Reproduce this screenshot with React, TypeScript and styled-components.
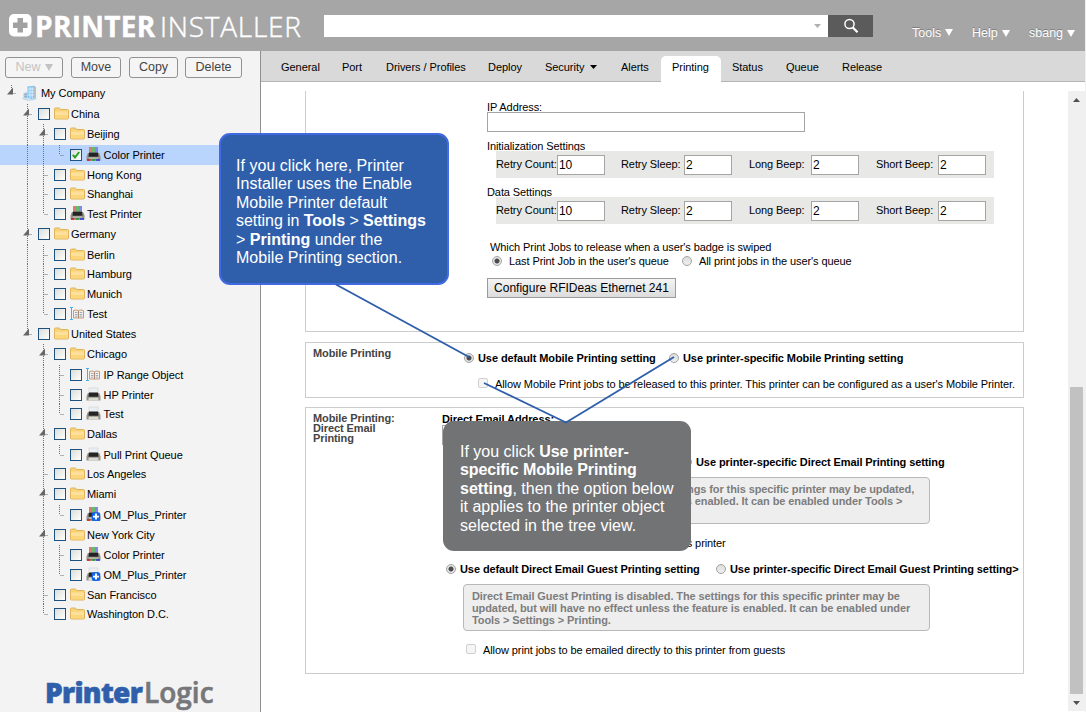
import React from "react";
import styled, { createGlobalStyle } from "styled-components";

const Global = createGlobalStyle`
  *, *::before, *::after { box-sizing: border-box; }
  html, body { margin: 0; padding: 0; overflow: hidden; background: #fff; }
  body { font-family: "Liberation Sans", Arial, sans-serif; font-size: 11px; color: #000; }
`;

const Page = styled.div`
  position: relative;
  width: 1086px;
  height: 712px;
  display: flex;
  flex-direction: column;
  background: #fff;
  border-right: 1px solid #f0f0f0;
  overflow: hidden;
`;

/* ---------- header ---------- */
const Header = styled.header`
  height: 51px;
  flex: none;
  display: flex;
  align-items: flex-start;
  background: #a6a6a6;
  color: #fff;
`;
const Brand = styled.div`
  width: 324px;
  height: 51px;
  padding: 0 0 0 9px;
  display: flex;
  align-items: center;
  font-family: "Open Sans", sans-serif;
  font-size: 28px;
  line-height: 50px;
  white-space: nowrap;
`;
const BrandMark = styled.svg`
  margin-right: 3px;
  flex: none;
`;
const BrandBold = styled.span`
  width: 125px;
  font-weight: 700;
  letter-spacing: 0.3px;
  -webkit-text-stroke: 0.4px #fff;
`;
const BrandLight = styled.span`
  font-weight: 300;
  letter-spacing: 0.75px;
  -webkit-text-stroke: 0.4px #fff;
`;
const SearchBox = styled.div`
  width: 504px;
  height: 22px;
  margin-top: 15px;
  padding-right: 7px;
  display: flex;
  align-items: center;
  justify-content: flex-end;
  background: #fff;
`;
const SearchButton = styled.div`
  width: 45px;
  height: 22px;
  margin-top: 15px;
  display: flex;
  justify-content: center;
  align-items: center;
  background: #5b5b5b;
`;
const UserMenu = styled.nav`
  display: flex;
  margin-left: 39px;
  font-size: 12.5px;
  line-height: 14px;
  text-shadow: 0 -1px 0 #7d7d7d;
`;
const UserMenuItem = styled.span<{ $w: number; $top: number }>`
  width: ${(p) => p.$w}px;
  margin-top: ${(p) => p.$top}px;
  white-space: nowrap;
  display: flex;
  align-items: center;
  gap: 4px;
`;

/* ---------- body ---------- */
const Body = styled.div`
  flex: 1;
  display: flex;
  min-height: 0;
`;
const Sidebar = styled.aside`
  width: 261px;
  flex: none;
  display: flex;
  flex-direction: column;
  background: #f3f3f3;
  border-right: 1px solid #8f8f8f;
`;
const Toolbar = styled.div`
  display: flex;
  flex: none;
  padding: 6px 0 0 5px;
  height: 32px;
`;
const ToolButton = styled.div<{ $w: number; $gap: number; $off?: boolean }>`
  width: ${(p) => p.$w}px;
  height: 21px;
  margin-right: ${(p) => p.$gap}px;
  padding-bottom: 1px;
  display: flex;
  align-items: center;
  justify-content: center;
  gap: 4px;
  border: 1px solid #929292;
  border-radius: 3px;
  background: #f5f5f5;
  color: ${(p) => (p.$off ? "#c3c3c3" : "#444")};
  font-size: 12.5px;
  line-height: 18px;
`;
const Tree = styled.div`
  flex: none;
  height: 575px;
  letter-spacing: -0.06px;
`;
const TreeRow = styled.div<{ $h: number; $on?: boolean }>`
  height: ${(p) => p.$h}px;
  display: flex;
  align-items: flex-start;
  background: ${(p) => (p.$on ? "#bad5fd" : "transparent")};
`;
const Guides = styled.svg`
  flex: none;
  overflow: visible;
`;
const TreeCheck = styled.span`
  width: 12px;
  height: 12px;
  margin: 4px 4px 0 0;
  flex: none;
  display: flex;
  border: 1px solid #1c5180;
  background: linear-gradient(135deg, #dcdcd7, #fff);
`;
const IconSlot = styled.span<{ $w: number }>`
  width: ${(p) => p.$w}px;
  height: 19px;
  flex: none;
  display: flex;
  padding-top: 2px;
`;
const TreeLabel = styled.span`
  line-height: 20px;
  white-space: nowrap;
`;
const Logo = styled.div`
  flex: 1;
  padding-left: 45px;
  font-family: "Open Sans", sans-serif;
  font-size: 28px;
  line-height: 68px;
  display: flex;
  white-space: nowrap;
`;
const LogoBlue = styled.span`
  width: 99px;
  color: #2f5fab;
  font-weight: 800;
  letter-spacing: -0.7px;
  -webkit-text-stroke: 0.6px #2f5fab;
`;
const LogoGray = styled.span`
  color: #76777a;
  font-weight: 600;
  letter-spacing: 0;
  -webkit-text-stroke: 0.6px #76777a;
`;

const Main = styled.main`
  flex: 1;
  min-width: 0;
  display: flex;
  flex-direction: column;
  letter-spacing: -0.09px;
`;
const TabBar = styled.nav`
  height: 31px;
  flex: none;
  display: flex;
  align-items: flex-end;
  padding-left: 9px;
  letter-spacing: -0.05px;
  background: linear-gradient(#d9d9d9 30px, #b4b4b4 30px);
`;
const Tab = styled.div<{ $w: number; $on?: boolean }>`
  width: ${(p) => p.$w}px;
  height: 26px;
  padding-left: 11px;
  display: flex;
  align-items: center;
  gap: 6px;
  padding-bottom: 4px;
  white-space: nowrap;
  border-radius: 5px 5px 0 0;
  background: ${(p) => (p.$on ? "#fff" : "transparent")};
`;
const Scroller = styled.div`
  flex: 1;
  min-height: 0;
  display: flex;
  margin: 9px 0 1px;
  justify-content: space-between;
`;
const Panels = styled.div`
  width: 719px;
  margin-left: 44px;
`;
const Panel = styled.section<{ $h: number; $gap: number; $cut?: boolean }>`
  height: ${(p) => p.$h}px;
  margin-bottom: ${(p) => p.$gap}px;
  display: flex;
  border: 1px solid #ccc;
  border-top-width: ${(p) => (p.$cut ? 0 : 1)}px;
`;
const PanelTitle = styled.div<{ $w: number }>`
  width: ${(p) => p.$w}px;
  flex: none;
  padding: 5px 0 0 7px;
  font-weight: 700;
  line-height: 10px;
  color: #444;
`;
const PanelBody = styled.div`
  flex: 1;
  min-width: 0;
  display: flex;
  flex-direction: column;
`;
const Line = styled.div<{ $h: number; $top?: number; $left?: number; $bold?: boolean }>`
  height: ${(p) => p.$h}px;
  margin-top: ${(p) => p.$top ?? 0}px;
  padding-left: ${(p) => p.$left ?? 0}px;
  flex: none;
  display: flex;
  align-items: center;
  line-height: ${(p) => p.$h}px;
  white-space: nowrap;
  font-weight: ${(p) => (p.$bold ? 700 : 400)};
`;
const GroupLabel = styled.div`
  height: 11px;
  margin-top: 8px;
  flex: none;
  line-height: 13px;
  white-space: nowrap;
`;
const Text = styled.span<{ $w?: number }>`
  width: ${(p) => (p.$w ? p.$w + "px" : "auto")};
  flex: none;
`;
const Field = styled.div<{ $w: number; $gap?: number }>`
  width: ${(p) => p.$w}px;
  height: 20px;
  flex: none;
  margin-right: ${(p) => p.$gap ?? 0}px;
  padding-left: 1px;
  border: 1px solid #a5a5a5;
  background: #fff;
  font-size: 12px;
  line-height: 18px;
`;
const Band = styled.div`
  width: 498px;
  height: 27px;
  margin-left: 9px;
  flex: none;
  display: flex;
  align-items: center;
  background: #e8e8e6;
  white-space: nowrap;

  ${Text} {
    padding-bottom: 2px;
  }
`;
const Radio = styled.span<{ $on?: boolean; $gap: number }>`
  width: 10px;
  height: 10px;
  margin: -1px ${(p) => p.$gap}px 0 0;
  flex: none;
  border-radius: 50%;
  border: 1px solid #a3a3a3;
  background: ${(p) =>
    p.$on ? "radial-gradient(circle, #4c4c4c 2px, #e6e6e6 3px)" : "linear-gradient(#dcdcdc, #efefef)"};
`;
const Check = styled.span<{ $gap: number }>`
  width: 10px;
  height: 10px;
  margin: -2px ${(p) => p.$gap}px 0 0;
  flex: none;
  border: 1px solid #d0d0d0;
  border-radius: 2px;
  background: #f5f5f5;
`;
const PushButton = styled.div`
  width: 189px;
  height: 20px;
  margin-top: 10px;
  border: 1px solid #9b9b9b;
  background: linear-gradient(#f4f4f4, #dcdcdc);
  font-size: 12px;
  letter-spacing: 0;
  line-height: 18px;
  text-align: center;
  white-space: nowrap;
`;
const Notice = styled.div<{ $top: number }>`
  width: 467px;
  height: 47px;
  margin: ${(p) => p.$top}px 0 0 21px;
  padding: 5px 0 0 8px;
  flex: none;
  border: 1px solid #b8b8b8;
  border-radius: 4px;
  background: #eee;
  color: #7d7d7d;
  font-weight: 700;
  letter-spacing: -0.1px;
  line-height: 12px;
  white-space: nowrap;
`;
const ScrollTrack = styled.div`
  width: 17px;
  padding: 7px 0 6px;
  display: flex;
  flex-direction: column;
  align-items: center;
  background: #f0f0f0;
`;
const ScrollThumb = styled.div`
  width: 13px;
  height: 307px;
  margin: 285px 0 auto;
  background: #c1c1c1;
`;

/* ---------- annotations over the page ---------- */
const Callout = styled.div<{ $x: number; $y: number; $w: number; $h: number; $gray?: boolean }>`
  position: absolute;
  left: ${(p) => p.$x}px;
  top: ${(p) => p.$y}px;
  width: ${(p) => p.$w}px;
  height: ${(p) => p.$h}px;
  padding: ${(p) => (p.$gray ? "22px 0 0 17px" : "22px 0 0 15px")};
  border: ${(p) => (p.$gray ? "0" : "2px solid #4169e1")};
  border-radius: 11px;
  background: ${(p) => (p.$gray ? "#727375" : "#2f5fab")};
  color: #fff;
  font-size: 16px;
  line-height: 18.4px;
  white-space: nowrap;
`;
const CalloutLine = styled.div<{ $ls?: number }>`
  letter-spacing: ${(p) => p.$ls ?? 0}px;
`;
const Leaders = styled.svg`
  position: absolute;
  left: 0;
  top: 0;
  pointer-events: none;
`;

/* ---------- icons ---------- */
const Caret = ({ w, h, fill, up }: { w: number; h: number; fill: string; up?: boolean }) => (
  <svg width={w} height={h} viewBox="0 0 10 10" preserveAspectRatio="none">
    <path d={up ? "M5 0L10 10H0z" : "M0 0H10L5 10z"} fill={fill} />
  </svg>
);

const FolderIcon = () => (
  <svg width="15" height="15" viewBox="0 0 15 15">
    <path d="M.5 3q0-1 1-1h4l1.200 1.500h6.800q1 0 1 1v7.500q0 1-1 1h-12q-1 0-1-1z" fill="#f8d374" stroke="#dfb45c" />
    <path d="M1 5.500h13v3.500h-13z" fill="#fee09a" />
    <path d="M1 9h13v3.500h-13z" fill="#fcd67c" />
  </svg>
);

const CompanyIcon = () => (
  <svg width="16" height="16" viewBox="0 0 15 16">
    <path d="M5 1.500L12 .8V13l-3 1-4-1z" fill="#7cc3f2" />
    <path d="M11.500 1l2 1v11l-2 1z" fill="#b9bec6" />
    <path d="M5.500 4h6M5.500 7h6M5.500 10h6M7.500 2v11M9.700 2v11" stroke="#e4f5ff" strokeWidth=".8" />
    <path d="M1 8l4-1v7l-4-1z" fill="#bfc6d2" />
    <path d="M2 9.500h2.500M2 11.500h2.500" stroke="#6db4e6" />
    <path d="M0 13.500q7 3.400 14 0" stroke="#b8d2ea" fill="none" strokeWidth="1.200" />
  </svg>
);

const PrinterIcon = ({ color, plus }: { color?: boolean; plus?: boolean }) => (
  <svg width="15" height="15" viewBox="0 0 15 15">
    {color ? (
      <>
        <path d="M3 0h3v5.500h-3z" fill="#e07878" />
        <path d="M6 0h3v5.500h-3z" fill="#68bb6d" />
        <path d="M9 0h3v5.500h-3z" fill="#8487ea" />
      </>
    ) : (
      <path d="M3 1h9v5h-9z" fill="#eceff2" stroke="#cdd0d4" strokeWidth=".6" />
    )}
    <path d="M1.800 6h11.400l1.300 3.500v4h-14v-4z" fill="#96948a" />
    <path d="M3 5.500h9l.5 4.300h-10z" fill="#242424" />
    {color ? (
      <>
        <path d="M3 10.500h9v1.200h-9z" fill="#c4c3b8" />
        <path d="M1 12.200h3.500v1.600h-3.500z" fill="#c92020" />
        <path d="M5.500 12.200h4v1.600h-4z" fill="#249a2c" />
        <path d="M10 12.200h4v1.600h-4z" fill="#2c3cd8" />
      </>
    ) : (
      <path d="M2.800 10.800h9.400l.4 2.700h-10.200z" fill="#dcddd2" />
    )}
    {plus && (
      <>
        <rect x="5.800" y="5.200" width="8.400" height="8.800" rx="2" fill="#1464e8" />
        <path d="M10 6.600v6M7 9.600h6" stroke="#fff" strokeWidth="1.900" />
      </>
    )}
  </svg>
);

const RangeIcon = () => (
  <svg width="15" height="15" viewBox="0 0 15 15">
    <path d="M1.500 1v13M0 1.500h3M0 13.500h3" stroke="#45aeea" />
    <path d="M3.500 4.500q2.500-1 5 0 2.500-1 5 0v7.500h-10z" fill="#f4efe9" stroke="#c39a7b" />
    <path d="M8.500 5v7" stroke="#a88a76" />
    <path d="M5 6.500h2.500M5 8.500h2.500M5 10.200h2.500M9.700 6.500h2.500M9.700 8.500h2.500M9.700 10.200h2.500" stroke="#9dabc0" />
  </svg>
);

type Kind = "root" | "folder" | "color" | "mono" | "colorPlus" | "monoPlus" | "range";
type Node = {
  t: string;
  d: number;
  k: Kind;
  h?: number;
  open?: boolean;
  on?: boolean;
};

const tree: Node[] = [
  { t: "My Company", d: 0, k: "root", open: true, h: 21 },
  { t: "China", d: 1, k: "folder", open: true },
  { t: "Beijing", d: 2, k: "folder", open: true, h: 21 },
  { t: "Color Printer", d: 3, k: "color", on: true },
  { t: "Hong Kong", d: 2, k: "folder", h: 19 },
  { t: "Shanghai", d: 2, k: "folder" },
  { t: "Test Printer", d: 2, k: "color" },
  { t: "Germany", d: 1, k: "folder", open: true, h: 21 },
  { t: "Berlin", d: 2, k: "folder", h: 19 },
  { t: "Hamburg", d: 2, k: "folder" },
  { t: "Munich", d: 2, k: "folder" },
  { t: "Test", d: 2, k: "range" },
  { t: "United States", d: 1, k: "folder", open: true },
  { t: "Chicago", d: 2, k: "folder", open: true, h: 21 },
  { t: "IP Range Object", d: 3, k: "range" },
  { t: "HP Printer", d: 3, k: "mono", h: 19 },
  { t: "Test", d: 3, k: "mono" },
  { t: "Dallas", d: 2, k: "folder", open: true, h: 21 },
  { t: "Pull Print Queue", d: 3, k: "mono", h: 19 },
  { t: "Los Angeles", d: 2, k: "folder" },
  { t: "Miami", d: 2, k: "folder", open: true, h: 21 },
  { t: "OM_Plus_Printer", d: 3, k: "colorPlus" },
  { t: "New York City", d: 2, k: "folder", open: true },
  { t: "Color Printer", d: 3, k: "color" },
  { t: "OM_Plus_Printer", d: 3, k: "monoPlus" },
  { t: "San Francisco", d: 2, k: "folder", h: 19 },
  { t: "Washington D.C.", d: 2, k: "folder" },
];

const iconFor = (k: Kind) => {
  switch (k) {
    case "root":
      return <CompanyIcon />;
    case "folder":
      return <FolderIcon />;
    case "range":
      return <RangeIcon />;
    default:
      return <PrinterIcon color={k.startsWith("color")} plus={k.endsWith("Plus")} />;
  }
};

/* A depth's guide keeps running below a row when a later sibling exists at that depth. */
const continues = (i: number, depth: number) => {
  for (let j = i + 1; j < tree.length; j++) {
    if (tree[j].d < depth) return false;
    if (tree[j].d === depth) return true;
  }
  return false;
};

const TreeItem = ({ node, index }: { node: Node; index: number }) => {
  const h = node.h ?? 20;
  const x = 11.5 + node.d * 16;
  const w = 22 + node.d * 16;
  const dots = { stroke: "#6f6f6f", strokeWidth: 1, strokeDasharray: "1 1" };
  return (
    <TreeRow $h={h} $on={node.on}>
      <Guides width={w} height={h}>
        {Array.from({ length: node.d }, (_, d) =>
          d > 0 && continues(index, d) ? (
            <line key={d} x1={11.5 + d * 16} x2={11.5 + d * 16} y1="0" y2={h} {...dots} />
          ) : null
        )}
        <line x1={x} x2={x} y1={node.d === 0 ? 2 : 0} y2={node.d > 0 && continues(index, node.d) ? h : 10} {...dots} />
        <line x1={x + 1} x2={x + 5} y1="10.500" y2="10.500" {...dots} />
        {node.open && <path d={`M${x + 1.5} 4.500V11.500H${x - 4.5}z`} fill="#666" />}
      </Guides>
      {node.d > 0 && (
        <TreeCheck>
          {node.on && (
            <svg width="10" height="10" viewBox="0 0 10 10">
              <path d="M1.800 4.800L4 7.400 8.200 2" fill="none" stroke="#21a121" strokeWidth="1.900" />
            </svg>
          )}
        </TreeCheck>
      )}
      <IconSlot $w={node.d === 0 ? 19 : node.d === 3 ? 17.6 : 17}>{iconFor(node.k)}</IconSlot>
      <TreeLabel>{node.t}</TreeLabel>
    </TreeRow>
  );
};

const settings: [string, string, number][] = [
  ["Retry Count:", "10", 61],
  ["Retry Sleep:", "2", 63],
  ["Long Beep:", "2", 62],
  ["Short Beep:", "2", 62],
];

const SettingsBand = () => (
  <Band>
    {settings.map(([label, value, w], i) => (
      <React.Fragment key={label}>
        <Text $w={w}>{label}</Text>
        <Field $w={48} $gap={i === 0 ? 16 : 17}>
          {value}
        </Field>
      </React.Fragment>
    ))}
  </Band>
);

const tabs: [string, number][] = [
  ["General", 61],
  ["Port", 44],
  ["Drivers / Profiles", 102],
  ["Deploy", 57],
  ["Security", 76],
  ["Alerts", 51],
  ["Printing", 60],
  ["Status", 54],
  ["Queue", 56],
  ["Release", 60],
];

export default function App() {
  return (
    <Page>
      <Global />
      <Header>
        <Brand>
          <BrandMark width="23" height="23" viewBox="0 0 23 23">
            <rect x="0" y="0" width="22.500" height="22.500" rx="5" fill="#fff" />
            <path d="M8.500 4h5.500v4.500h4.500v5.500h-4.500v4.500h-5.500v-4.500h-4.500v-5.500h4.500z" fill="#a1a1a1" />
          </BrandMark>
          <BrandBold>PRINTER</BrandBold>
          <BrandLight>INSTALLER</BrandLight>
        </Brand>
        <SearchBox>
          <Caret w={7} h={4} fill="#b0b0b0" />
        </SearchBox>
        <SearchButton>
          <svg width="16" height="16" viewBox="0 0 16 16" fill="none" stroke="#fff">
            <circle cx="6.500" cy="6" r="4.600" strokeWidth="1.500" />
            <path d="M9.800 9.500l4.700 4.700" strokeWidth="2.200" />
          </svg>
        </SearchButton>
        <UserMenu>
          <UserMenuItem $w={60} $top={25}>
            Tools <Caret w={8} h={7} fill="#fff" />
          </UserMenuItem>
          <UserMenuItem $w={57} $top={26}>
            Help <Caret w={8} h={7} fill="#fff" />
          </UserMenuItem>
          <UserMenuItem $w={50} $top={26}>
            sbang <Caret w={8} h={7} fill="#fff" />
          </UserMenuItem>
        </UserMenu>
      </Header>
      <Body>
        <Sidebar>
          <Toolbar>
            <ToolButton $w={58} $gap={8} $off>
              New <Caret w={8} h={7} fill="#c3c3c3" />
            </ToolButton>
            <ToolButton $w={50} $gap={8}>Move</ToolButton>
            <ToolButton $w={49} $gap={7}>Copy</ToolButton>
            <ToolButton $w={57} $gap={0}>Delete</ToolButton>
          </Toolbar>
          <Tree>
            {tree.map((n, i) => (
              <TreeItem key={i} node={n} index={i} />
            ))}
          </Tree>
          <Logo>
            <LogoBlue>Printer</LogoBlue>
            <LogoGray>Logic</LogoGray>
          </Logo>
        </Sidebar>
        <Main>
          <TabBar>
            {tabs.map(([t, w]) => (
              <Tab key={t} $w={w} $on={t === "Printing"}>
                {t}
                {t === "Security" && <Caret w={7} h={4} fill="#000" />}
              </Tab>
            ))}
          </TabBar>
          <Scroller>
            <Panels>
              <Panel $h={241} $gap={10} $cut>
                <PanelTitle $w={181} />
                <PanelBody>
                  <Line $h={10} $top={11}>IP Address:</Line>
                  <Field $w={318} />
                  <GroupLabel>Initialization Settings</GroupLabel>
                  <SettingsBand />
                  <GroupLabel>Data Settings</GroupLabel>
                  <SettingsBand />
                  <Line $h={14} $top={16} $left={3}>
                    Which Print Jobs to release when a user's badge is swiped
                  </Line>
                  <Line $h={14} $left={5}>
                    <Radio $on $gap={7} />
                    <Text $w={173}>Last Print Job in the user's queue</Text>
                    <Radio $gap={7} />
                    <Text>All print jobs in the user's queue</Text>
                  </Line>
                  <PushButton>Configure RFIDeas Ethernet 241</PushButton>
                </PanelBody>
              </Panel>
              <Panel $h={56} $gap={9}>
                <PanelTitle $w={136}>Mobile Printing</PanelTitle>
                <PanelBody>
                  <Line $h={14} $top={8} $left={22} $bold>
                    <Radio $on $gap={4} />
                    <Text $w={191}>Use default Mobile Printing setting</Text>
                    <Radio $gap={4} />
                    <Text>Use printer-specific Mobile Printing setting</Text>
                  </Line>
                  <Line $h={14} $top={12} $left={36}>
                    <Check $gap={7} />
                    <Text>
                      Allow Mobile Print jobs to be released to this printer. This printer can be configured as a
                      user's Mobile Printer.
                    </Text>
                  </Line>
                </PanelBody>
              </Panel>
              <Panel $h={267} $gap={0}>
                <PanelTitle $w={136}>
                  Mobile Printing:
                  <br />
                  Direct Email
                  <br />
                  Printing
                </PanelTitle>
                <PanelBody>
                  <Line $h={12} $top={5} $bold>Direct Email Address:</Line>
                  <Field $w={240} />
                  <Line $h={14} $top={10} $left={4} $bold>
                    <Radio $on $gap={4} />
                    <Text $w={222}>Use default Direct Email Printing setting</Text>
                    <Radio $gap={4} />
                    <Text>Use printer-specific Direct Email Printing setting</Text>
                  </Line>
                  <Notice $top={8}>
                    Direct Email Printing is disabled. The settings for this specific printer may be updated,
                    <br />
                    but will have no effect unless the feature is enabled. It can be enabled under Tools &gt;
                    <br />
                    Settings &gt; Printing.
                  </Notice>
                  <Line $h={14} $top={12} $left={24}>
                    <Check $gap={7} />
                    <Text>Allow print jobs to be emailed directly to this printer</Text>
                  </Line>
                  <Line $h={14} $top={12} $left={4} $bold>
                    <Radio $on $gap={4} />
                    <Text $w={256}>Use default Direct Email Guest Printing setting</Text>
                    <Radio $gap={4} />
                    <Text>Use printer-specific Direct Email Guest Printing setting&gt;</Text>
                  </Line>
                  <Notice $top={8}>
                    Direct Email Guest Printing is disabled. The settings for this specific printer may be
                    <br />
                    updated, but will have no effect unless the feature is enabled. It can be enabled under
                    <br />
                    Tools &gt; Settings &gt; Printing.
                  </Notice>
                  <Line $h={14} $top={12} $left={24}>
                    <Check $gap={7} />
                    <Text>Allow print jobs to be emailed directly to this printer from guests</Text>
                  </Line>
                </PanelBody>
              </Panel>
            </Panels>
            <ScrollTrack>
              <Caret w={7} h={4} fill="#505050" up />
              <ScrollThumb />
              <Caret w={7} h={4} fill="#505050" />
            </ScrollTrack>
          </Scroller>
        </Main>
      </Body>
      <Callout $x={219} $y={133} $w={230} $h={152}>
        <CalloutLine $ls={0.03}>If you click here, Printer</CalloutLine>
        <CalloutLine $ls={0.03}>Installer uses the Enable</CalloutLine>
        <CalloutLine>Mobile Printer default</CalloutLine>
        <CalloutLine $ls={-0.06}>
          setting in <b>Tools</b> &gt; <b>Settings</b>
        </CalloutLine>
        <CalloutLine>
          &gt; <b>Printing</b> under the
        </CalloutLine>
        <CalloutLine $ls={0.03}>Mobile Printing section.</CalloutLine>
      </Callout>
      <Callout $x={443} $y={421} $w={248} $h={130} $gray>
        <CalloutLine>
          If you click <b>Use printer-</b>
        </CalloutLine>
        <CalloutLine $ls={-0.12}>
          <b>specific Mobile Printing</b>
        </CalloutLine>
        <CalloutLine>
          <b>setting</b>, then the option below
        </CalloutLine>
        <CalloutLine>it applies to the printer object</CalloutLine>
        <CalloutLine $ls={0.04}>selected in the tree view.</CalloutLine>
      </Callout>
      <Leaders width="1086" height="712" fill="none" stroke="#2f5fab" strokeWidth="1.900">
        <path d="M336 284.500L469 357" />
        <path d="M484 383L566 422.500L674 357" />
      </Leaders>
    </Page>
  );
}
